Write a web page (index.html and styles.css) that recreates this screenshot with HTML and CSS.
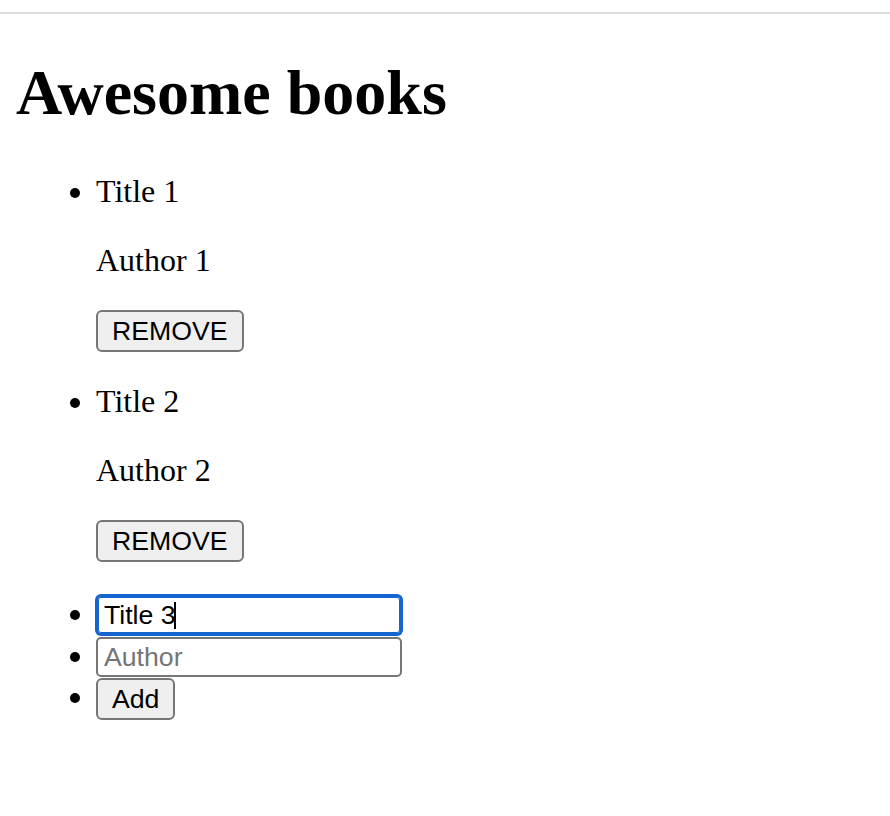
FILE: index.html
```html
<!DOCTYPE html>
<html lang="en">
<head>
<meta charset="utf-8">
<title>Awesome books</title>
<link rel="stylesheet" href="styles.css">
</head>
<body>
<div class="chrome-line"></div>
<main class="page">
  <h1 class="title">Awesome books</h1>
  <ul class="books">
    <li class="book">
      <p class="book-title">Title 1</p>
      <p class="book-author">Author 1</p>
      <button class="btn remove" type="button">REMOVE</button>
    </li>
    <li class="book">
      <p class="book-title">Title 2</p>
      <p class="book-author">Author 2</p>
      <button class="btn remove" type="button">REMOVE</button>
    </li>
    <li class="field">
      <span class="input-wrap">
        <input class="text-input focused" type="text" value="Title 3" placeholder="Title">
        <span class="caret"></span>
      </span>
    </li>
    <li class="field">
      <input class="text-input" type="text" placeholder="Author">
    </li>
    <li class="field field-btn">
      <button class="btn add" type="button">Add</button>
    </li>
  </ul>
</main>
</body>
</html>
```

FILE: styles.css
```css
html, body {
  background: #ffffff;
}

body {
  margin: 0;
  font-family: "Liberation Serif", "Times New Roman", serif;
  color: #000000;
}

.chrome-line {
  height: 12px;
  border-bottom: 2px solid #dcdcdc;
}

.page {
  padding: 0 16px;
}

.title {
  font-size: 64px;
  font-weight: bold;
  line-height: 74px;
  margin: 42px 0 43px;
}

.books {
  margin: 0;
  padding-left: 80px;
  list-style: disc;
  font-size: 32px;
  line-height: 37px;
}

.book {
  margin-bottom: 31px;
}

.book-title,
.book-author {
  margin: 0;
}

.book-author {
  margin-top: 32px;
}

.btn {
  font-family: "Liberation Sans", Arial, sans-serif;
  font-size: 26.67px;
  line-height: 30px;
  color: #000000;
  background: #efefef;
  border: 2px solid #767676;
  border-radius: 6px;
  padding: 4px 14px;
  margin: 0;
}

.remove {
  display: block;
  margin-top: 31px;
}

.field {
  height: 40px;
  padding-top: 2px;
}

.field-btn {
  padding-top: 1px;
  height: 43px;
}

.input-wrap {
  position: relative;
  display: inline-block;
  vertical-align: top;
}

.text-input {
  box-sizing: border-box;
  width: 306px;
  height: 40px;
  font-family: "Liberation Sans", Arial, sans-serif;
  font-size: 26.67px;
  color: #000000;
  background: #ffffff;
  border: 2px solid #767676;
  border-radius: 5px;
  padding: 2px 6px;
  margin: 0;
  vertical-align: top;
  outline: none;
}

.text-input::placeholder {
  color: #757575;
}

.text-input.focused {
  border-color: #1565d0;
  box-shadow: 0 0 0 1px #1565d0, inset 0 0 0 1px #1565d0;
}

.caret {
  position: absolute;
  left: 78px;
  top: 7px;
  width: 2px;
  height: 27px;
  background: #000000;
}

.add {
  vertical-align: top;
}
```
